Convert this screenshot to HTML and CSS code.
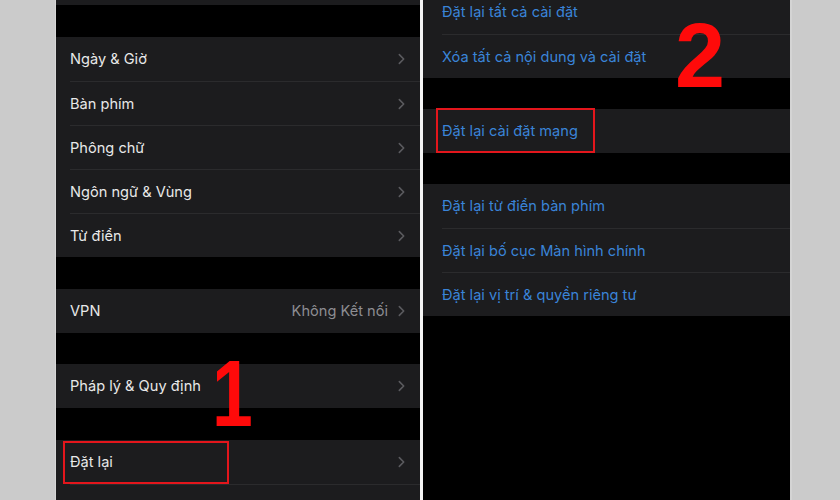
FILE: index.html
```html
<!DOCTYPE html>
<html lang="vi">
<head>
<meta charset="utf-8">
<title>Đặt lại cài đặt mạng</title>
<link rel="stylesheet" href="styles.css">
</head>
<body>
<div class="screen">
  <div class="margin margin-left"></div>

  <section class="panel panel-left">
    <div class="group group-stub"></div>

    <div class="group gap-32">
      <div class="row"><div class="row-inner"><span class="label">Ngày &amp; Giờ</span><svg class="chev" viewBox="0 0 8 13"><polyline points="1.5,1.5 6.5,6.5 1.5,11.5"/></svg></div></div>
      <div class="row"><div class="row-inner"><span class="label">Bàn phím</span><svg class="chev" viewBox="0 0 8 13"><polyline points="1.5,1.5 6.5,6.5 1.5,11.5"/></svg></div></div>
      <div class="row"><div class="row-inner"><span class="label">Phông chữ</span><svg class="chev" viewBox="0 0 8 13"><polyline points="1.5,1.5 6.5,6.5 1.5,11.5"/></svg></div></div>
      <div class="row"><div class="row-inner"><span class="label">Ngôn ngữ &amp; Vùng</span><svg class="chev" viewBox="0 0 8 13"><polyline points="1.5,1.5 6.5,6.5 1.5,11.5"/></svg></div></div>
      <div class="row"><div class="row-inner"><span class="label">Từ điển</span><svg class="chev" viewBox="0 0 8 13"><polyline points="1.5,1.5 6.5,6.5 1.5,11.5"/></svg></div></div>
    </div>

    <div class="group gap-32">
      <div class="row"><div class="row-inner"><span class="label">VPN</span><span class="value">Không Kết nối</span><svg class="chev" viewBox="0 0 8 13"><polyline points="1.5,1.5 6.5,6.5 1.5,11.5"/></svg></div></div>
    </div>

    <div class="group gap-31">
      <div class="row"><div class="row-inner"><span class="label">Pháp lý &amp; Quy định</span><svg class="chev" viewBox="0 0 8 13"><polyline points="1.5,1.5 6.5,6.5 1.5,11.5"/></svg></div></div>
    </div>

    <div class="group gap-32">
      <div class="row row-marked"><div class="row-inner"><span class="label">Đặt lại</span><svg class="chev" viewBox="0 0 8 13"><polyline points="1.5,1.5 6.5,6.5 1.5,11.5"/></svg></div><div class="mark mark-1"></div></div>
      <div class="row"><div class="row-inner"></div></div>
    </div>
  </section>

  <div class="divider"></div>

  <section class="panel panel-right">
    <div class="group group-scrolled">
      <div class="row"><div class="row-inner"><span class="label link">Đặt lại tất cả cài đặt</span></div></div>
      <div class="row"><div class="row-inner"><span class="label link">Xóa tất cả nội dung và cài đặt</span></div></div>
    </div>

    <div class="group gap-31">
      <div class="row row-marked"><div class="row-inner"><span class="label link">Đặt lại cài đặt mạng</span></div><div class="mark mark-2"></div></div>
    </div>

    <div class="group gap-31">
      <div class="row"><div class="row-inner"><span class="label link">Đặt lại từ điển bàn phím</span></div></div>
      <div class="row"><div class="row-inner"><span class="label link">Đặt lại bố cục Màn hình chính</span></div></div>
      <div class="row"><div class="row-inner"><span class="label link">Đặt lại vị trí &amp; quyền riêng tư</span></div></div>
    </div>
  </section>

  <div class="margin margin-right"></div>

  <div class="step step-1">1</div>
  <div class="step step-2">2</div>
</div>
</body>
</html>
```

FILE: styles.css
```css
* {
  box-sizing: border-box;
}

html, body {
  margin: 0;
  padding: 0;
  background: #cbcbcb;
}

.screen {
  position: relative;
  width: 840px;
  height: 500px;
  overflow: hidden;
  display: flex;
  font-family: "Inter", "Roboto", "Noto Sans", sans-serif;
}

.margin {
  flex: none;
  background: #cbcbcb;
}

.margin-left {
  width: 56px;
  border-right: 1px solid #d6d6d6;
}

.margin-right {
  width: 50px;
  border-left: 2px solid #d4d4d4;
}

.divider {
  flex: none;
  width: 3px;
  background: #f4f4f4;
}

.panel {
  flex: none;
  height: 500px;
  background: #000;
  overflow: hidden;
  display: flex;
  flex-direction: column;
}

.panel-left {
  width: 364px;
}

.panel-right {
  width: 367px;
}

.group {
  flex: none;
  background: #1c1c1e;
}

.group-stub {
  height: 5px;
}

.group-scrolled {
  margin-top: -10px;
}

.gap-32 {
  margin-top: 32px;
}

.gap-31 {
  margin-top: 31px;
}

.row {
  position: relative;
  padding-left: 14px;
}

.panel-right .row {
  padding-left: 19px;
}

.row-inner {
  display: flex;
  align-items: center;
  height: 44px;
  padding-right: 15px;
  border-top: 1px solid #2b2b2d;
}

.row:first-child .row-inner {
  border-top: none;
}

.label {
  flex: 1;
  font-size: 14.6px;
  color: #e8e8e8;
  white-space: nowrap;
}

.label.link {
  color: #3a84d8;
}

.value {
  font-size: 14.6px;
  color: #8d8d92;
  margin-right: 10px;
  white-space: nowrap;
}

.chev {
  flex: none;
  width: 7px;
  height: 12px;
  fill: none;
  stroke: #5b5b5f;
  stroke-width: 1.8;
  stroke-linecap: round;
  stroke-linejoin: round;
}

.mark {
  position: absolute;
  border: 2.5px solid #e3161c;
}

.mark-1 {
  left: 7px;
  top: 1px;
  width: 166px;
  height: 43px;
}

.mark-2 {
  left: 13px;
  top: -1px;
  width: 159px;
  height: 45px;
}

.step {
  position: absolute;
  font-family: "Liberation Sans", Arial, sans-serif;
  font-weight: 700;
  line-height: 1;
  color: #ff0a0a;
}

.step-1 {
  left: 212px;
  top: 347px;
  font-size: 94px;
  transform: scaleX(0.78);
  transform-origin: left top;
}

.step-2 {
  left: 675px;
  top: 11px;
  font-size: 90px;
}
```
